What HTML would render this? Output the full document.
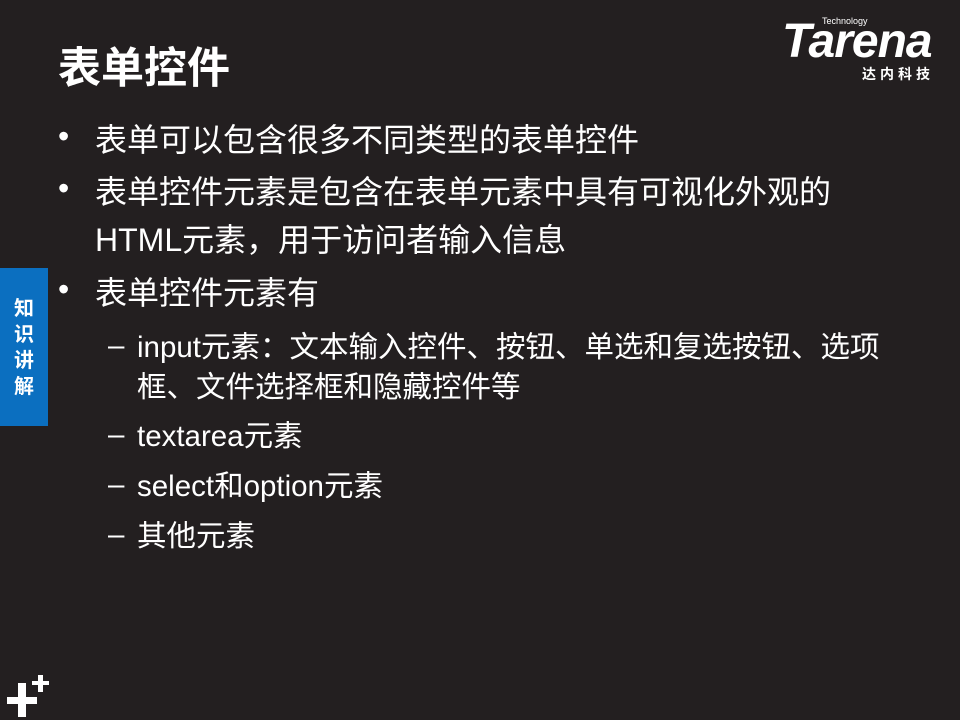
<!DOCTYPE html>
<html><head><meta charset="utf-8"><style>
body{margin:0;width:960px;height:720px;background:#231f20;overflow:hidden;position:relative;font-family:"Liberation Sans","Noto Sans CJK SC",sans-serif;color:#fff}
.a{position:absolute;white-space:nowrap}
.t{left:58px;top:34px;font-size:43px;font-weight:bold}
.b{font-size:32px;left:95px}
.d{font-size:29.5px;left:137px}
.bu{font-size:32px;left:58px}
.da{font-size:29.5px;left:108px}
.tab{left:0;top:268px;width:48px;height:158px;background:#0b6fc0;}
.tab div{position:absolute;left:13px;top:28px;width:22px;font-size:20px;font-weight:bold;line-height:26px;white-space:normal;text-align:center}
</style></head><body>
<div class="a t">表单控件</div>
<div class="a" style="left:782px;top:16px;width:165px;height:70px">
<div class="a" style="left:40px;top:0;font-size:9px">Technology</div>
<div class="a" style="left:0;top:2px;font-size:48px;font-weight:bold;font-style:italic;letter-spacing:-1px;line-height:48px">Tarena</div>
<div class="a" style="left:80px;top:48px;font-size:14px;font-weight:bold;letter-spacing:4px">达内科技</div>
</div>
<div class="a tab"><div>知识讲解</div></div>
<div class="a bu" style="top:118px">•</div><div class="a b" style="top:115px">表单可以包含很多不同类型的表单控件</div>
<div class="a bu" style="top:170px">•</div><div class="a b" style="top:167px">表单控件元素是包含在表单元素中具有可视化外观的</div>
<div class="a b" style="top:215px">HTML元素，用于访问者输入信息</div>
<div class="a bu" style="top:271px">•</div><div class="a b" style="top:268px">表单控件元素有</div>
<div class="a da" style="top:329px">–</div><div class="a d" style="top:324px">input元素：文本输入控件、按钮、单选和复选按钮、选项</div>
<div class="a d" style="top:364px">框、文件选择框和隐藏控件等</div>
<div class="a da" style="top:418px">–</div><div class="a d" style="top:413px">textarea元素</div>
<div class="a da" style="top:468px">–</div><div class="a d" style="top:463px">select和option元素</div>
<div class="a da" style="top:518px">–</div><div class="a d" style="top:513px">其他元素</div>
<svg class="a" style="left:0;top:660px" width="60" height="60"><path d="M7 697h30v7H7zM18 683h8v34h-8z" transform="translate(0,-660)" fill="#fff"/><path d="M32 681h17v4H32zM38 675h5v17h-5z" transform="translate(0,-660)" fill="#fff"/></svg>
</body></html>
